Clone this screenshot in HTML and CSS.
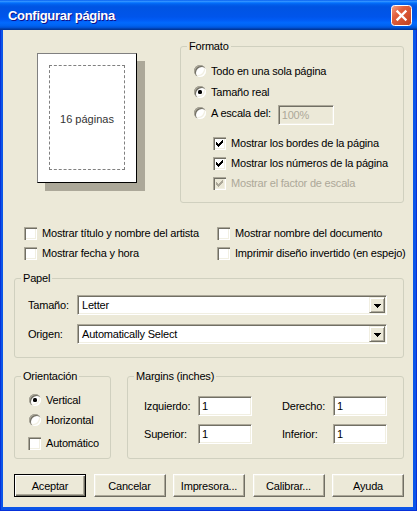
FILE: index.html
```html
<!DOCTYPE html>
<html lang="es">
<head>
<meta charset="utf-8">
<title>Configurar página</title>
<link rel="stylesheet" href="styles.css">
</head>
<body>
<svg class="defs" width="0" height="0" aria-hidden="true">
  <symbol id="tick" viewBox="0 0 7 7"><path d="M6 0h1v1h-1zM5 1h2v1h-2zM0 2h1v1h-1zM4 2h3v1h-3zM0 3h2v1h-2zM3 3h3v1h-3zM0 4h5v1h-5zM1 5h3v1h-3zM2 6h1v1h-1z"/></symbol>
  <symbol id="down" viewBox="0 0 7 4"><path d="M0 0h7v1h-1v1h-1v1h-1v1h-1v-1h-1v-1h-1v-1h-1z"/></symbol>
</svg>
<div class="window">
  <div class="titlebar">
    <span class="title">Configurar página</span>
    <span class="close">
      <svg width="21" height="21" viewBox="0 0 21 21">
        <defs>
          <linearGradient id="cg" x1="0" y1="0" x2="1" y2="1">
            <stop offset="0" stop-color="#F4A48C"/>
            <stop offset="0.35" stop-color="#E2603E"/>
            <stop offset="1" stop-color="#C2401E"/>
          </linearGradient>
        </defs>
        <rect x="0.5" y="0.5" width="20" height="20" rx="3" fill="url(#cg)" stroke="#fff"/>
        <path d="M6.5 6.5L14.5 14.5M14.5 6.5L6.5 14.5" stroke="#fff" stroke-width="2.4" stroke-linecap="square"/>
      </svg>
    </span>
  </div>
  <div class="client">
    <div class="top-row">
      <div class="preview">
        <div class="page"><div class="margin-box">16 páginas</div></div>
      </div>
      <fieldset class="group formato">
        <legend>Formato</legend>
        <div class="body">
          <div class="row21"><span class="radio"></span><span>Todo en una sola página</span></div>
          <div class="row21"><span class="radio checked"></span><span>Tamaño real</span></div>
          <div class="row21"><span class="radio"></span><span>A escala del:</span><span class="field scale disabled">100%</span></div>
          <div class="checks">
            <div class="row20"><span class="check"><svg><use href="#tick"/></svg></span><span>Mostrar los bordes de la página</span></div>
            <div class="row20"><span class="check"><svg><use href="#tick"/></svg></span><span>Mostrar los números de la página</span></div>
            <div class="row20 muted"><span class="check disabled"><svg><use href="#tick"/></svg></span><span>Mostrar el factor de escala</span></div>
          </div>
        </div>
      </fieldset>
    </div>

    <div class="extras">
      <div class="row20"><span class="check"></span><span>Mostrar título y nombre del artista</span></div>
      <div class="row20"><span class="check"></span><span>Mostrar nombre del documento</span></div>
      <div class="row20"><span class="check"></span><span>Mostrar fecha y hora</span></div>
      <div class="row20"><span class="check"></span><span>Imprimir diseño invertido (en espejo)</span></div>
    </div>

    <fieldset class="group papel">
      <legend>Papel</legend>
      <div class="body">
        <div class="field-row"><span class="lbl">Tamaño:</span><span class="combo"><span class="combo-text">Letter</span><span class="drop"><svg><use href="#down"/></svg></span></span></div>
        <div class="field-row"><span class="lbl">Origen:</span><span class="combo"><span class="combo-text">Automatically Select</span><span class="drop"><svg><use href="#down"/></svg></span></span></div>
      </div>
    </fieldset>

    <div class="bottom-row">
      <fieldset class="group orient">
        <legend>Orientación</legend>
        <div class="body">
          <div class="row20"><span class="radio checked"></span><span>Vertical</span></div>
          <div class="row20"><span class="radio"></span><span>Horizontal</span></div>
          <div class="row20 auto"><span class="check"></span><span>Automático</span></div>
        </div>
      </fieldset>
      <fieldset class="group margins">
        <legend>Margins (inches)</legend>
        <div class="body">
          <div class="mrow"><span class="mlbl">Izquierdo:</span><span class="field num">1</span><span class="mlbl second">Derecho:</span><span class="field num">1</span></div>
          <div class="mrow"><span class="mlbl">Superior:</span><span class="field num">1</span><span class="mlbl second">Inferior:</span><span class="field num">1</span></div>
        </div>
      </fieldset>
    </div>

    <div class="buttons">
      <span class="btn default">Aceptar</span>
      <span class="btn">Cancelar</span>
      <span class="btn">Impresora...</span>
      <span class="btn">Calibrar...</span>
      <span class="btn">Ayuda</span>
    </div>
  </div>
</div>
</body>
</html>
```

FILE: styles.css
```css
* { box-sizing: border-box; }
html, body { margin: 0; padding: 0; }
body {
  width: 417px;
  height: 511px;
  overflow: hidden;
  font-family: "Liberation Sans", Arial, sans-serif;
  font-size: 11px;
  letter-spacing: -0.2px;
  color: #000;
  background: #0B52E6;
}
.defs { position: absolute; width: 0; height: 0; overflow: hidden; }

.window {
  width: 417px;
  height: 511px;
  display: flex;
  flex-direction: column;
  background: #0B55E8;
  box-shadow: inset 1px 0 #0831D9, inset -1px 0 #0831D9, inset 0 -1px #0831D9;
}
.titlebar {
  height: 30px;
  flex: none;
  display: flex;
  align-items: center;
  padding: 0 5px 0 8px;
  background: linear-gradient(to bottom, #0058EE 0%, #3593FF 4%, #288EFF 6%, #127DFF 8%, #036FFC 10%, #0262EE 14%, #0057E5 20%, #0054E3 24%, #0055EB 56%, #005BF5 66%, #026AFE 76%, #0062EF 86%, #0052D6 92%, #0040AB 96%, #003092 100%);
}
.title {
  flex: 1;
  color: #fff;
  font-weight: bold;
  font-size: 13px;
  letter-spacing: -0.3px;
  text-shadow: 1px 1px #0F1089;
}
.close { width: 21px; height: 21px; display: block; }
.close svg { display: block; }

.client {
  flex: 1;
  margin: 0 4px 4px 3px;
  background: #ECE9D8;
  padding: 10px 0 0 11px;
}

/* group boxes */
.group {
  margin: 0;
  padding: 0;
  min-width: 0;
  border: 1px solid #D0D0BF;
  border-radius: 3px;
}
.group legend {
  padding: 0 2px;
  margin-left: 6px;
  line-height: 13px;
  height: 13px;
}

/* top row */
.top-row { display: flex; }
.preview { width: 166px; flex: none; padding: 13px 0 0 23px; }
.page {
  width: 100px;
  height: 130px;
  background: #fff;
  border: 1px solid;
  border-color: #808080 #000 #000 #808080;
  box-shadow: 8px 8px 0 #ACA899;
  padding: 11px 11px 12px 11px;
}
.margin-box {
  height: 100%;
  border: 1px dashed #808080;
  display: flex;
  align-items: center;
  justify-content: center;
  color: #333;
  letter-spacing: 0;
  padding-top: 2px;
}

.formato { width: 224px; flex: none; }
.formato .body { padding: 7px 0 9px 13px; }
.row21 { display: flex; align-items: center; height: 21px; }
.row20 { display: flex; align-items: center; height: 20px; }
.checks { margin-top: 10px; padding-left: 19px; }
.muted { color: #ACA899; }

/* controls */
.radio {
  width: 12px;
  height: 12px;
  flex: none;
  border-radius: 50%;
  background: #fff;
  margin-right: 5px;
  box-shadow: inset 1px 1px 0 #ACA899, inset 2px 2px 0 #716F64, inset -1px -1px 0 #fff, inset -2px -2px 0 #F1EFE2;
  display: flex;
  align-items: center;
  justify-content: center;
}
.radio.checked::after {
  content: "";
  width: 4px;
  height: 4px;
  border-radius: 1.5px;
  background: #000;
}
.check {
  width: 13px;
  height: 13px;
  flex: none;
  background: #fff;
  margin-right: 5px;
  padding: 3px;
  box-shadow: inset 1px 1px 0 #ACA899, inset 2px 2px 0 #716F64, inset -1px -1px 0 #fff, inset -2px -2px 0 #F1EFE2;
}
.check svg { display: block; width: 7px; height: 7px; fill: #000; }
.check.disabled { background: #ECE9D8; }
.check.disabled svg { fill: #ACA899; }

.field {
  height: 20px;
  background: #fff;
  border: 1px solid;
  border-color: #ACA899 #fff #fff #ACA899;
  box-shadow: inset 1px 1px 0 #716F64, inset -1px -1px 0 #F1EFE2;
  display: flex;
  align-items: center;
  padding-left: 3px;
}
.field.disabled { background: #ECE9D8; color: #ACA899; }
.scale { width: 56px; margin-left: 7px; margin-top: 4px; }

/* extras grid */
.extras {
  display: grid;
  grid-template-columns: 193px auto;
  grid-auto-rows: 20px;
  margin-top: 20px;
  padding-left: 10px;
}

/* papel */
.papel { width: 390px; margin-top: 9px; }
.papel .body {
  padding: 10px 16px 13px 13px;
  display: flex;
  flex-direction: column;
  gap: 9px;
}
.field-row { display: flex; align-items: center; height: 20px; }
.lbl { width: 49px; flex: none; }
.combo {
  width: 311px;
  height: 20px;
  background: #fff;
  border: 1px solid;
  border-color: #ACA899 #fff #fff #ACA899;
  box-shadow: inset 1px 1px 0 #716F64, inset -1px -1px 0 #F1EFE2;
  display: flex;
  align-items: center;
  padding: 1px 1px 1px 4px;
}
.combo-text { flex: 1; }
.drop {
  width: 16px;
  height: 16px;
  flex: none;
  background: #ECE9D8;
  border: 1px solid;
  border-color: #F1EFE2 #716F64 #716F64 #F1EFE2;
  box-shadow: inset 1px 1px 0 #fff, inset -1px -1px 0 #ACA899;
  display: flex;
  align-items: center;
  justify-content: center;
}
.drop svg { display: block; width: 7px; height: 4px; fill: #000; margin-top: 1px; }

/* bottom row */
.bottom-row { display: flex; margin-top: 12px; width: 390px; }
.orient { width: 97px; flex: none; }
.orient .body { padding: 7px 0 5px 14px; }
.orient .auto { margin-top: 3px; margin-left: -1px; }
.margins { width: 277px; flex: none; margin-left: 16px; }
.margins .body {
  padding: 13px 0 14px 16px;
  display: flex;
  flex-direction: column;
  gap: 8px;
}
.mrow { display: flex; align-items: center; height: 20px; }
.mlbl { width: 54px; flex: none; }
.mlbl.second { width: 51px; margin-left: 30px; }
.num { width: 54px; flex: none; }

/* buttons */
.buttons {
  display: flex;
  justify-content: space-between;
  width: 390px;
  margin-top: 15px;
}
.btn {
  width: 72px;
  height: 23px;
  display: flex;
  align-items: center;
  justify-content: center;
  background: #ECE9D8;
  border: 1px solid;
  border-color: #fff #716F64 #716F64 #fff;
  box-shadow: inset -1px -1px 0 #ACA899, inset 1px 1px 0 #F1EFE2;
}
.btn.default {
  border-color: #000;
  box-shadow: inset 1px 1px 0 #fff, inset -1px -1px 0 #716F64, inset -2px -2px 0 #ACA899;
}
```
